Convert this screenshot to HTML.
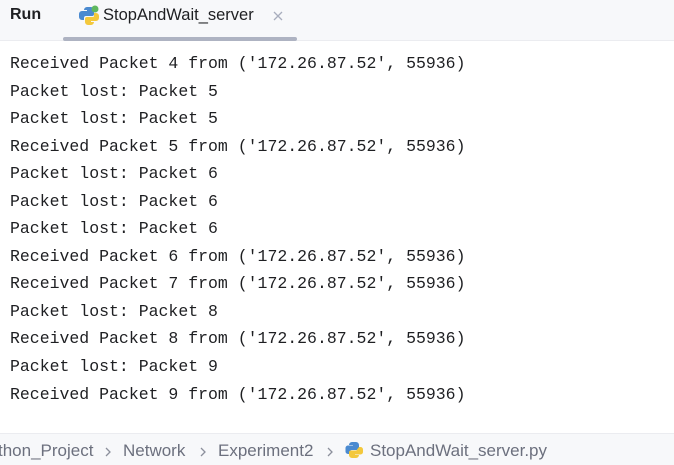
<!DOCTYPE html>
<html><head><style>
html,body{margin:0;padding:0;width:674px;height:465px;overflow:hidden;background:#fff;position:relative}
.hdr{position:absolute;left:0;top:0;width:674px;height:40px;background:#f7f8fa;border-bottom:1px solid #ebecf0}
.t{position:absolute;font-family:"Liberation Sans",sans-serif;font-size:16.5px;color:#1e1f22}
.ul{position:absolute;left:63px;top:37px;width:234px;height:4px;background:#aeb3c2;border-radius:2px}
.con{position:absolute;left:10px;top:50px;font-family:"Liberation Mono",monospace;font-size:16.5px;line-height:27.55px;color:#1e1f22;white-space:pre}
.ftr{position:absolute;left:0;top:433px;width:674px;height:32px;background:#f7f8fa;border-top:1px solid #ebecf0}
.ft{position:absolute;top:441px;font-family:"Liberation Sans",sans-serif;font-size:17px;color:#6c707e;white-space:pre}
.ch{position:absolute;top:446px}
</style></head><body>
<div class="hdr"></div>
<div class="t" style="left:10px;top:6px;font-weight:bold;font-size:16px">Run</div>
<svg style="position:absolute;left:78px;top:5px" width="22" height="20" viewBox="0 0 22 20">
<path d="M9 2h4a3 3 0 0 1 3 3v4a2 2 0 0 1-2 2H8a2 2 0 0 0-2 2v2H4a3 3 0 0 1-3-3V9a3 3 0 0 1 3-3h5V5H6a3 3 0 0 1 3-3z" fill="#4a8ad0"/>
<path d="M16 8h2a3 3 0 0 1 3 3v2a3 3 0 0 1-3 3h-5v1h3a3 3 0 0 1-3 3h-3a3 3 0 0 1-3-3v-3a2 2 0 0 1 2-2h6a1 1 0 0 0 1-1z" fill="#f3c83c"/>
<circle cx="17" cy="4" r="3.5" fill="#5fb85f"/>
</svg>
<div class="t" style="left:103px;top:6px">StopAndWait_server</div>
<svg style="position:absolute;left:273px;top:11px" width="10" height="10" viewBox="0 0 10 10"><path d="M1 1L9 9M9 1L1 9" stroke="#a8adbd" stroke-width="1.3"/></svg>
<div class="ul"></div>
<div class="con">Received Packet 4 from ('172.26.87.52', 55936)
Packet lost: Packet 5
Packet lost: Packet 5
Received Packet 5 from ('172.26.87.52', 55936)
Packet lost: Packet 6
Packet lost: Packet 6
Packet lost: Packet 6
Received Packet 6 from ('172.26.87.52', 55936)
Received Packet 7 from ('172.26.87.52', 55936)
Packet lost: Packet 8
Received Packet 8 from ('172.26.87.52', 55936)
Packet lost: Packet 9
Received Packet 9 from ('172.26.87.52', 55936)</div>
<div class="ftr"></div>
<div class="ft" style="left:-2px">thon_Project</div>
<svg class="ch" style="left:104px" width="8" height="12" viewBox="0 0 8 12"><path d="M2 2l4 4-4 4" fill="none" stroke="#8c909c" stroke-width="1.3"/></svg>
<div class="ft" style="left:123px">Network</div>
<svg class="ch" style="left:199px" width="8" height="12" viewBox="0 0 8 12"><path d="M2 2l4 4-4 4" fill="none" stroke="#8c909c" stroke-width="1.3"/></svg>
<div class="ft" style="left:218px">Experiment2</div>
<svg class="ch" style="left:326px" width="8" height="12" viewBox="0 0 8 12"><path d="M2 2l4 4-4 4" fill="none" stroke="#8c909c" stroke-width="1.3"/></svg>
<svg style="position:absolute;left:345px;top:441px" width="18" height="18" viewBox="0 0 18 18">
<path d="M7 1h4a3 3 0 0 1 3 3v3a2 2 0 0 1-2 2H7a2 2 0 0 0-2 2v2H3a2.5 2.5 0 0 1-2.5-2.5V7A2.5 2.5 0 0 1 3 4.5h5V4H4a3 3 0 0 1 3-3z" fill="#4a8ad0"/>
<path d="M14 6h1.5A2.5 2.5 0 0 1 18 8.5v2.5a2.5 2.5 0 0 1-2.5 2.5H10v.5h4a3 3 0 0 1-3 3H7a3 3 0 0 1-3-3v-2.5a2 2 0 0 1 2-2h5a1 1 0 0 0 1-1z" fill="#f3c83c"/>
</svg>
<div class="ft" style="left:370px">StopAndWait_server.py</div>
</body></html>
